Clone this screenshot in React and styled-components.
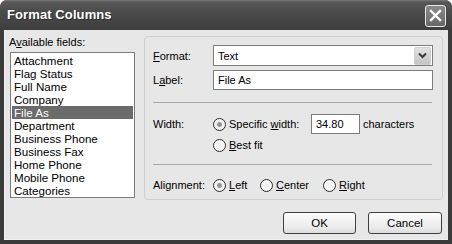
import React from 'react';
import styled, {createGlobalStyle} from 'styled-components';

const GlobalStyle = createGlobalStyle`
  html, body {
    margin: 0;
    padding: 0;
    background: #fff;
  }
  body {
    font-family: "Liberation Sans", Arial, sans-serif;
    font-size: 11px;
    color: #000;
  }
`;

const Window = styled.div`
  width: 452px;
  height: 244px;
  display: flex;
  flex-direction: column;
  background: #3b3b3b;
  border-radius: 7px 7px 0 0;
  overflow: hidden;
`;
const TitleBar = styled.div`
  height: 30px;
  flex: none;
  display: flex;
  align-items: center;
  justify-content: space-between;
  padding: 0 6px 0 7px;
  box-sizing: border-box;
  background: linear-gradient(#7a7a7a 0, #585858 2px, #4b4b4b 40%, #444 70%, #3d3d3d 100%);
`;
const Title = styled.h1`
  margin: 0 0 1px;
  font: bold 13px "Liberation Sans", Arial, sans-serif;
  color: #fff;
  text-shadow: 1px 1px 0 #2a2a2a;
  letter-spacing: 0.1px;
`;
const CloseButton = styled.button`
  width: 21px;
  height: 22px;
  padding: 0;
  display: flex;
  align-items: center;
  justify-content: center;
  border: 1px solid #e8e8e8;
  border-radius: 3px;
  background: linear-gradient(#8a8a8a, #666);
  margin-top: 1px;
`;
const Frame = styled.div`
  flex: 1;
  display: flex;
  padding: 0 4px 4px;
`;
const Body = styled.div`
  flex: 1;
  display: flex;
  gap: 9px;
  padding: 6px 5px 0 4px;
  background: #e7e7e7;
  border-left: 1px solid #f2f2f2;
  border-bottom: 1px solid #f2f2f2;
`;
const LeftColumn = styled.div`
  width: 126px;
  display: flex;
  flex-direction: column;
`;
const FieldLabel = styled.div`
  height: 13px;
  line-height: 13px;
  margin-bottom: 3px;
`;
const ListBox = styled.ul`
  list-style: none;
  margin: 0 0 0 1px;
  padding: 1px;
  height: 146px;
  box-sizing: border-box;
  background: #fff;
  border: 1px solid #7c7c7c;
`;
const ListItem = styled.li`
  height: 13px;
  line-height: 13px;
  padding-left: 2px;
  font-size: 11.6px;
  white-space: nowrap;
  background: ${p => (p.$selected ? '#6b6b6b' : 'transparent')};
  color: ${p => (p.$selected ? '#fff' : '#000')};
`;
const RightColumn = styled.div`
  flex: 1;
  display: flex;
  flex-direction: column;
`;
const GroupBox = styled.div`
  height: 164px;
  box-sizing: border-box;
  padding: 8px 9px 7px 8px;
  border: 1px solid #cfcfcf;
  border-radius: 4px;
  display: flex;
  flex-direction: column;
`;
const Row = styled.div`
  display: flex;
  align-items: center;
  height: ${p => p.$h}px;
  margin-top: ${p => p.$mt || 0}px;
`;
const RowLabel = styled.div`
  width: 60px;
  flex: none;
`;
const Combo = styled.div`
  flex: 1;
  height: 21px;
  box-sizing: border-box;
  border: 1px solid #7c7c7c;
  background: #fff;
  display: flex;
  align-items: center;
  justify-content: space-between;
  padding: 0 1px 0 4px;
`;
const DropButton = styled.div`
  width: 15px;
  height: 16px;
  border-radius: 2px;
  background: linear-gradient(#e2e2e2, #c4c4c4);
  border: 1px solid #cfcfcf;
  display: flex;
  align-items: center;
  justify-content: center;
`;
const TextBox = styled.div`
  flex: ${p => (p.$w ? 'none' : 1)};
  width: ${p => (p.$w ? `${p.$w}px` : 'auto')};
  height: 20px;
  box-sizing: border-box;
  border: 1px solid #7c7c7c;
  background: #fff;
  padding: 0 4px;
  line-height: 18px;
`;
const Separator = styled.div`
  height: 1px;
  margin: ${p => p.$mt}px 1px 0 0;
  background: #a8a8a8;
`;
const Option = styled.label`
  display: flex;
  align-items: center;
  gap: 3px;
  width: ${p => (p.$w ? `${p.$w}px` : 'auto')};
  flex: none;
`;
const Radio = styled.span`
  width: 13px;
  height: 13px;
  box-sizing: border-box;
  border-radius: 50%;
  border: 1px solid #2c2c2c;
  background: radial-gradient(circle at 50% 50%, ${p => (p.$checked ? '#8a8a8a 0, #9c9c9c 2px, #eee 3px' : '#f0f0f0 0')}, #fff 100%);
  flex: none;
`;
const Suffix = styled.span`
  margin-left: 3px;
`;
const ButtonRow = styled.div`
  display: flex;
  justify-content: flex-end;
  gap: 12px;
  margin-top: 12px;
  padding-right: 1px;
`;
const Button = styled.button`
  width: ${p => p.$w}px;
  height: 22px;
  box-sizing: border-box;
  border: 1px solid #3e3e3e;
  border-radius: 3px;
  background: linear-gradient(#fdfdfd, #ececec 70%, #dcdcdc);
  font: 11.5px "Liberation Sans", Arial, sans-serif;
  color: #000;
  padding: 0;
`;

const fields = [
  'Attachment', 'Flag Status', 'Full Name', 'Company', 'File As', 'Department',
  'Business Phone', 'Business Fax', 'Home Phone', 'Mobile Phone', 'Categories',
];

export default function App() {
  return (
    <Window>
      <GlobalStyle />
      <TitleBar>
        <Title>Format Columns</Title>
        <CloseButton>
          <svg width="13" height="13" viewBox="0 0 13 13">
            <path d="M2 2 L11 11 M11 2 L2 11" stroke="#fff" strokeWidth="2.4" strokeLinecap="square" />
          </svg>
        </CloseButton>
      </TitleBar>
      <Frame>
        <Body>
          <LeftColumn>
            <FieldLabel>A<u>v</u>ailable fields:</FieldLabel>
            <ListBox>
              {fields.map(f => (
                <ListItem key={f} $selected={f === 'File As'}>{f}</ListItem>
              ))}
            </ListBox>
          </LeftColumn>
          <RightColumn>
            <GroupBox>
              <Row $h={21}>
                <RowLabel><u>F</u>ormat:</RowLabel>
                <Combo>
                  <span>Text</span>
                  <DropButton>
                    <svg width="9" height="7" viewBox="0 0 9 7">
                      <path d="M1 1.5 L4.5 5 L8 1.5" fill="none" stroke="#3a3a3a" strokeWidth="2" />
                    </svg>
                  </DropButton>
                </Combo>
              </Row>
              <Row $h={20} $mt={4}>
                <RowLabel>L<u>a</u>bel:</RowLabel>
                <TextBox>File As</TextBox>
              </Row>
              <Separator $mt={12} />
              <Row $h={20} $mt={11}>
                <RowLabel>Width:</RowLabel>
                <Option $w={98}>
                  <Radio $checked />
                  <span>Specific <u>w</u>idth:</span>
                </Option>
                <TextBox $w={49}>34.80</TextBox>
                <Suffix>characters</Suffix>
              </Row>
              <Row $h={14} $mt={4}>
                <RowLabel />
                <Option>
                  <Radio />
                  <span><u>B</u>est fit</span>
                </Option>
              </Row>
              <Separator $mt={12} />
              <Row $h={14} $mt={13}>
                <RowLabel>Alignment:</RowLabel>
                <Option $w={47}>
                  <Radio $checked />
                  <span><u>L</u>eft</span>
                </Option>
                <Option $w={63}>
                  <Radio />
                  <span><u>C</u>enter</span>
                </Option>
                <Option>
                  <Radio />
                  <span><u>R</u>ight</span>
                </Option>
              </Row>
            </GroupBox>
            <ButtonRow>
              <Button $w={73}>OK</Button>
              <Button $w={74}>Cancel</Button>
            </ButtonRow>
          </RightColumn>
        </Body>
      </Frame>
    </Window>
  );
}
